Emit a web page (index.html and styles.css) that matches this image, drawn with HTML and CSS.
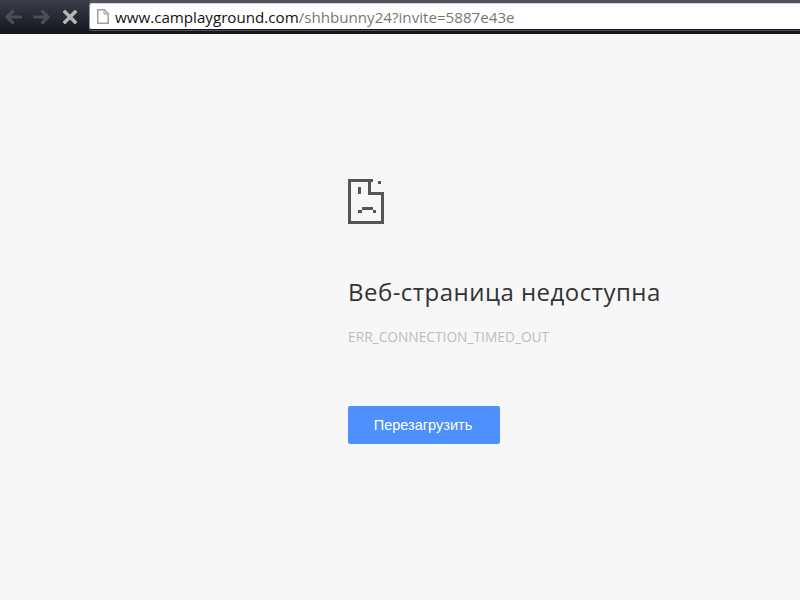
FILE: index.html
```html
<!DOCTYPE html>
<html lang="ru">
<head>
<meta charset="utf-8">
<title>www.camplayground.com</title>
<link rel="stylesheet" href="styles.css">
</head>
<body>
<header class="toolbar">
  <nav class="nav-buttons">
    <svg class="nav-icon" width="18" height="16" viewBox="0 0 18 16"><path d="M16.5 8 H3 M8.5 2.5 L3 8 L8.5 13.5" fill="none" stroke="#4a4d55" stroke-width="3.2" stroke-linecap="round" stroke-linejoin="round"/></svg>
    <svg class="nav-icon" width="18" height="16" viewBox="0 0 18 16"><path d="M1.5 8 H15 M9.5 2.5 L15 8 L9.5 13.5" fill="none" stroke="#4a4d55" stroke-width="3.2" stroke-linecap="round" stroke-linejoin="round"/></svg>
    <svg class="stop-icon" width="14" height="14" viewBox="0 0 14 14"><path d="M2 2 L12 12 M12 2 L2 12" stroke="#b4b5b7" stroke-width="3.6" stroke-linecap="square"/></svg>
  </nav>
  <div class="omnibox">
    <svg class="page-icon" width="12" height="15" viewBox="0 0 12 15"><path d="M.75 .75 H7.5 L11.25 4.5 V14.25 H.75 Z" fill="#fff" stroke="#a0a0a0" stroke-width="1.5"/><path d="M7 1 V5 H11" fill="#dcdcdc" stroke="#a0a0a0"/></svg>
    <span class="url"><span class="host">www.camplayground.com</span><span class="path">/shhbunny24?invite=5887e43e</span></span>
  </div>
</header>
<main class="page">
  <div class="error">
    <svg class="sad-icon" width="36" height="45" viewBox="0 0 36 45" shape-rendering="crispEdges">
      <path class="sad-shape" d="M0 0 H25 V3 H3 V42 H33 V13 H36 V45 H0 Z"/>
      <path class="sad-shape" d="M20 0 H23 V13 H36 V16 H20 Z"/>
      <rect class="sad-shape" x="30" y="2" width="3" height="3"/>
      <rect class="sad-shape" x="10" y="8" width="3" height="7"/>
      <rect class="sad-shape" x="14" y="28" width="11" height="3"/>
      <rect class="sad-shape" x="10" y="31" width="4" height="3"/>
      <rect class="sad-shape" x="25" y="31" width="3" height="3"/>
    </svg>
    <h1 class="title">Веб-страница недоступна</h1>
    <p class="code">ERR_CONNECTION_TIMED_OUT</p>
    <button class="reload">Перезагрузить</button>
  </div>
</main>
</body>
</html>
```
FILE: styles.css
```css
* { box-sizing: border-box; }
html, body { margin: 0; height: 100%; }
body { background: #f7f7f7; overflow: hidden; display: flex; flex-direction: column; }
.toolbar {
  height: 34px;
  flex: none;
  display: flex;
  align-items: flex-start;
  padding-top: 3px;
  background: linear-gradient(#3a3d48, #14161e);
}
.nav-buttons { display: flex; align-items: center; width: 89px; height: 27px; padding-left: 4px; gap: 11px; }
.stop-icon { margin-left: 1px; }
.omnibox {
  flex: 1;
  height: 27px;
  background: #fff;
  border: 1px solid #15171c;
  border-left-color: #8f9196;
  border-right: 0;
  border-top-color: #d4d4d4;
  border-radius: 3px 0 0 3px;
  box-shadow: 0 1px 0 #50535d, 0 -3px 0 #50535d;
  display: flex;
  align-items: center;
  padding-left: 7px;
  gap: 6px;
}
.page-icon { flex: none; }
.url { font: 15.15px "Open Sans", sans-serif; white-space: nowrap; }
.host { color: #111; }
.path { color: #777; }
.page { flex: 1; padding-left: 348px; padding-top: 145px; }
.error { display: flex; flex-direction: column; align-items: flex-start; }
.sad-icon { display: block; }
.sad-shape { fill: #555; }
.title { margin: 53px 0 0; font: 400 24px/30px "Open Sans", sans-serif; letter-spacing: .47px; color: #333; }
.code { margin: 21px 0 0; font: 13.75px/18px "Open Sans", sans-serif; color: #bdbdbd; }
.reload {
  margin-top: 60px;
  width: 152px;
  height: 38px;
  border: 0;
  border-radius: 2px;
  background: #4d90fe;
  color: #fff;
  font: 14.5px "Liberation Sans", sans-serif;
  padding: 0 2px 0 0;
}
```
